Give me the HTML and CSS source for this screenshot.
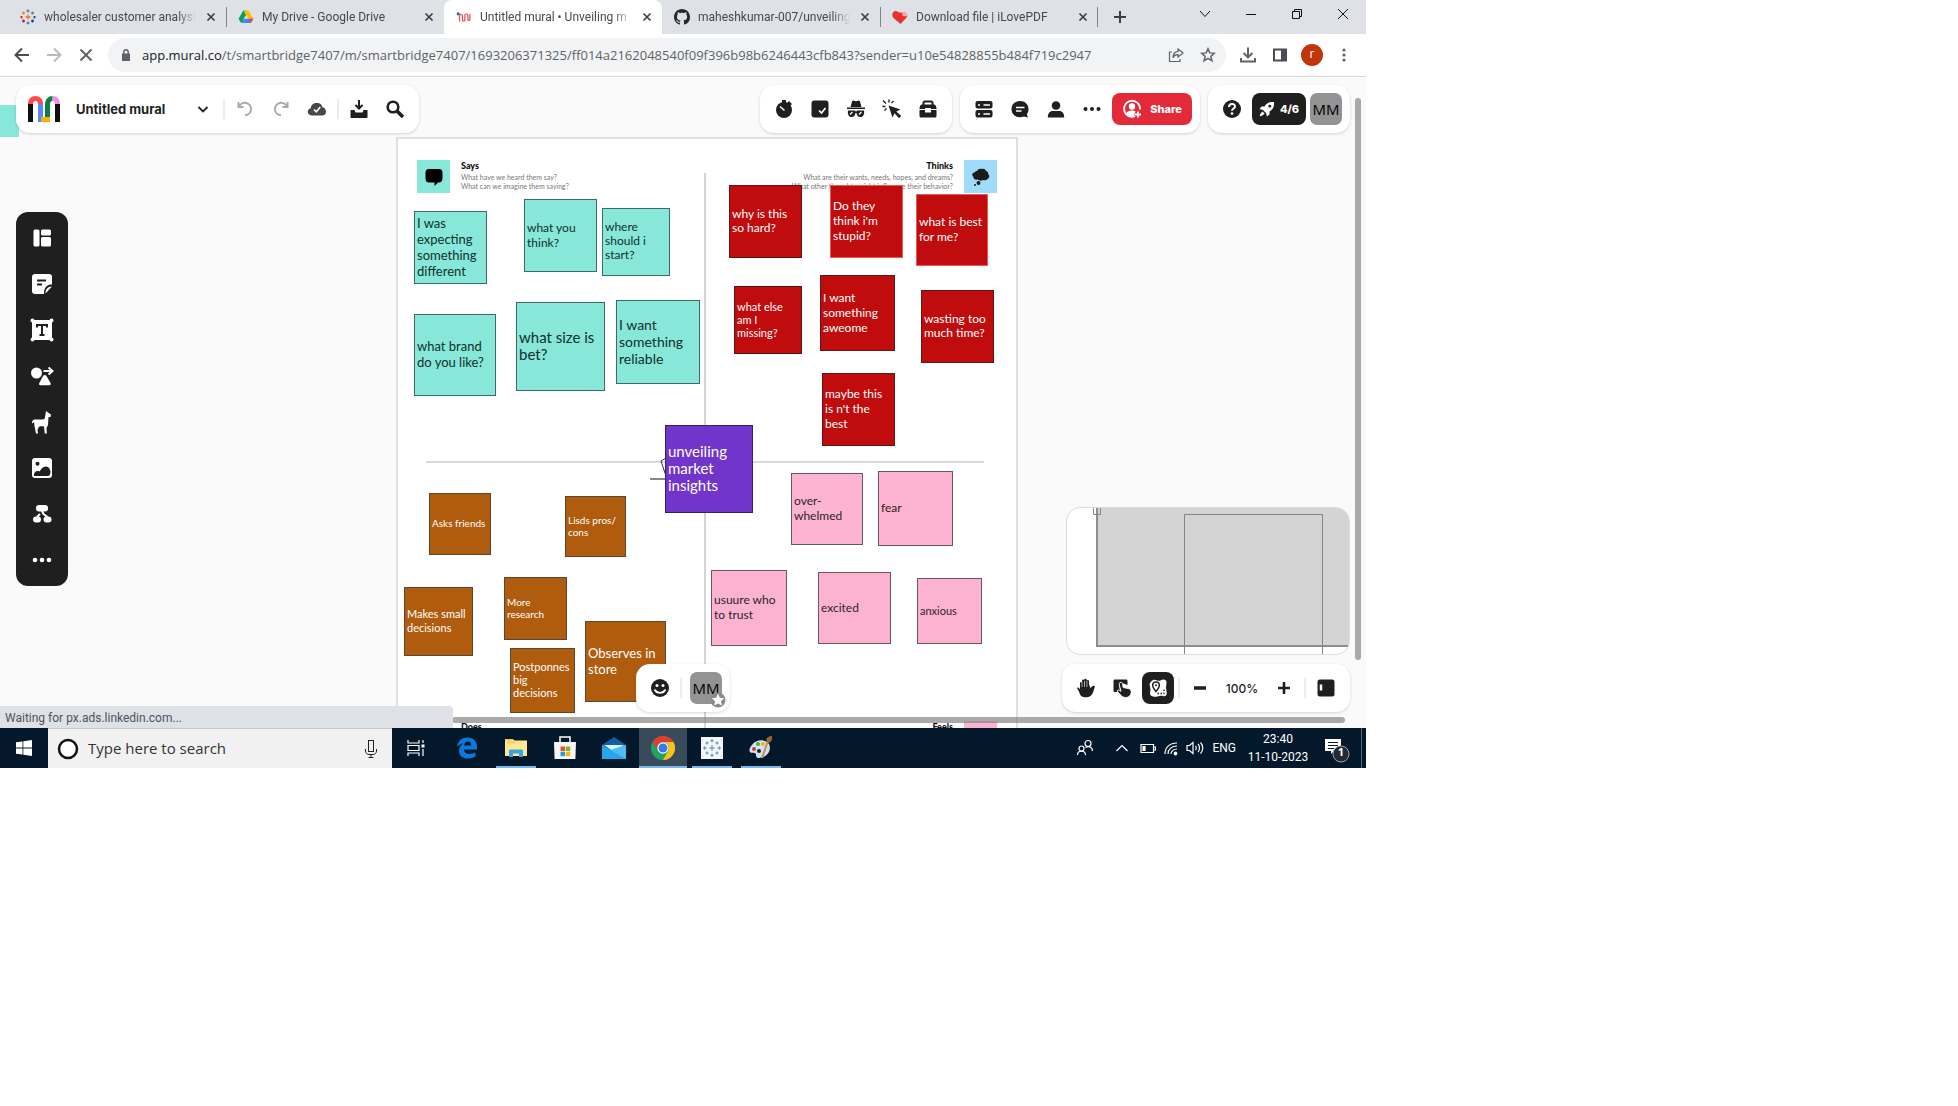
FILE: index.html
```html
<!DOCTYPE html>
<html lang="en">
<head>
<meta charset="utf-8">
<title>Untitled mural</title>
<link rel="stylesheet" href="styles.css">
</head>
<body>
<div class="desktop">
  <header class="tabs">
    <div class="tab">
      <svg class="fav" viewBox="0 0 16 16" fill="none" stroke-width="1.3"><path stroke="#e8762d" d="M8 5.5v5M5.500 8h5"/><path stroke="#5b7fa6" d="M8 .5v3M6.500 2h3M8 12.500v3M6.500 14h3"/><path stroke="#eb912c" d="M3.500 2.500v3M2 4h3"/><path stroke="#c72037" d="M3.500 10.500v3M2 12h3M1.500 7v2.500M.5 8h2"/><path stroke="#1f457e" d="M12.500 10.500v3M11 12h3M14.500 7v2.500M13.500 8h2"/><path stroke="#59879b" d="M12.500 2.500v3M11 4h3"/></svg>
      <span class="tab-name">wholesaler customer analysis</span>
      <button class="tab-x" aria-label="Close tab"><svg viewBox="0 0 10 10"><path d="M1.500 1.500l7 7M8.500 1.500l-7 7"/></svg></button>
    </div>
    <div class="tab line-left">
      <svg class="fav" viewBox="0 0 16 16"><path fill="#00a94f" d="M5.500 1.500h2.700L3.400 14 .7 9.800z"/><path fill="#0f9d58" d="M5.500 1.500L8 5.800 3.300 14 .7 9.800z"/><path fill="#fbbc04" d="M5.500 1.500h5l4.800 8.300h-5z"/><path fill="#4285f4" d="M5.800 9.800h9.500L12.800 14H3.300z"/><path fill="#ea4335" d="M10.400 9.800h4.900L12.800 14z"/></svg>
      <span class="tab-name">My Drive - Google Drive</span>
      <button class="tab-x" aria-label="Close tab"><svg viewBox="0 0 10 10"><path d="M1.500 1.500l7 7M8.500 1.500l-7 7"/></svg></button>
    </div>
    <div class="tab active">
      <svg class="fav" viewBox="0 0 16 16" fill="none" stroke="#e5484d" stroke-width="1.200"><path d="M3.500 12.500V7a1.500 1.500 0 013 0v4a1.200 1.200 0 002.400 0V6.500a1.500 1.500 0 013 0v4a1 1 0 002 0V5"/><circle cx="2.200" cy="4.800" r="1.600" fill="#2463c5" stroke="none"/></svg>
      <span class="tab-name">Untitled mural • Unveiling m</span>
      <button class="tab-x" aria-label="Close tab"><svg viewBox="0 0 10 10"><path d="M1.500 1.500l7 7M8.500 1.500l-7 7"/></svg></button>
    </div>
    <div class="tab">
      <svg class="fav" viewBox="0 0 16 16"><path fill="#24292f" d="M8 0C3.580 0 0 3.580 0 8c0 3.540 2.290 6.530 5.470 7.590.4.070.55-.17.55-.38 0-.19-.01-.82-.01-1.490-2.010.37-2.530-.49-2.690-.94-.09-.23-.48-.94-.82-1.130-.28-.15-.68-.52-.01-.53.63-.01 1.080.58 1.230.82.72 1.210 1.870.87 2.330.66.07-.52.28-.87.51-1.070-1.780-.2-3.640-.89-3.640-3.950 0-.87.31-1.590.82-2.150-.08-.2-.36-1.020.08-2.120 0 0 .67-.21 2.200.82.64-.18 1.320-.27 2-.27s1.360.09 2 .27c1.530-1.040 2.200-.82 2.200-.82.44 1.100.16 1.920.08 2.120.51.56.82 1.270.82 2.150 0 3.070-1.870 3.750-3.650 3.950.29.25.54.73.54 1.480 0 1.070-.01 1.930-.01 2.200 0 .21.15.46.55.38A8.010 8.010 0 0016 8c0-4.420-3.580-8-8-8z"/></svg>
      <span class="tab-name">maheshkumar-007/unveiling</span>
      <button class="tab-x" aria-label="Close tab"><svg viewBox="0 0 10 10"><path d="M1.500 1.500l7 7M8.500 1.500l-7 7"/></svg></button>
    </div>
    <div class="tab line-left line-right">
      <svg class="fav" viewBox="0 0 16 16"><path fill="#e5322d" d="M1 3.500C2.500 1.500 5 1.500 7 3.500h3l5.500 4L8.500 15 1.500 9C0 7.500 0 5 1 3.500z"/><path fill="#f7a9a7" d="M10 3.500c2.500-2 6 .5 5.500 4l-5-.5z"/></svg>
      <span class="tab-name">Download file | iLovePDF</span>
      <button class="tab-x" aria-label="Close tab"><svg viewBox="0 0 10 10"><path d="M1.500 1.500l7 7M8.500 1.500l-7 7"/></svg></button>
    </div>
    <button class="new-tab" aria-label="New tab"><svg width="14" height="14" viewBox="0 0 14 14"><path fill="none" stroke="#3c4043" stroke-width="2" d="M7 1v12M1 7h12"/></svg></button>
    <div class="win">
      <button aria-label="Search tabs"><svg viewBox="0 0 12 12"><path d="M1 3l5 5.500L11 3"/></svg></button>
      <button aria-label="Minimize"><svg viewBox="0 0 12 12"><path d="M1 6.500h10"/></svg></button>
      <button aria-label="Restore"><svg viewBox="0 0 12 12"><path d="M1.500 3.500h7v7h-7zM3.500 3.500v-2h7v7h-2"/></svg></button>
      <button aria-label="Close"><svg viewBox="0 0 12 12"><path d="M1 1l10 10M11 1L1 11"/></svg></button>
    </div>
  </header>

  <div class="nav">
    <button class="nav-b" aria-label="Back"><svg viewBox="0 0 16 16"><path stroke="#4a4d51" d="M15 8H2M8 1.500L1.500 8 8 14.500"/></svg></button>
    <button class="nav-b" aria-label="Forward"><svg viewBox="0 0 16 16"><path stroke="#b9bbbe" d="M1 8h13M8 1.500L14.500 8 8 14.500"/></svg></button>
    <button class="nav-b" aria-label="Stop"><svg viewBox="0 0 16 16"><path stroke="#5f6368" d="M2.500 2.500l11 11M13.500 2.500l-11 11"/></svg></button>
    <div class="omni">
      <svg class="lock" viewBox="0 0 10 12"><path fill="#5f6368" d="M1 4.500h8V12H1z"/><path fill="none" stroke="#5f6368" stroke-width="1.400" d="M2.800 5V3a2.200 2.200 0 014.400 0v2"/></svg>
      <a class="url" href="#"><b>app.mural.co</b>/t/smartbridge7407/m/smartbridge7407/1693206371325/ff014a2162048540f09f396b98b6246443cfb843?sender=u10e54828855b484f719c2947</a>
      <button class="nav-b thin" aria-label="Share page"><svg viewBox="0 0 16 16"><path stroke="#5f6368" d="M4 5H1.500v9.500h10.500V12M10 2l5 4-5 4V7.700C7.500 7.600 5.800 8.800 5 10.800 5 7 7 4.600 10 4.300z"/></svg></button>
      <button class="nav-b thin" aria-label="Bookmark"><svg viewBox="0 0 16 16"><path stroke="#5f6368" stroke-width="1.500" d="M8 1.800l1.800 4.100 4.500.4-3.400 3 1 4.400L8 11.400l-3.900 2.300 1-4.400-3.400-3 4.500-.4z"/></svg></button>
    </div>
    <button class="nav-b" aria-label="Downloads"><svg viewBox="0 0 16 16"><path stroke="#5f6368" d="M8 .5v9M3.500 6L8 10.300 12.500 6M1 11v3.500h14V11"/></svg></button>
    <button class="nav-b" aria-label="Side panel"><svg viewBox="0 0 16 16"><path stroke="#4a4d51" d="M2 2.500h12v11H2z"/><path fill="#4a4d51" d="M9 2h5v12H9z"/></svg></button>
    <button class="nav-b" aria-label="Profile"><span class="me">r</span></button>
    <button class="nav-b" aria-label="Menu"><svg viewBox="0 0 16 16"><g fill="#5f6368"><circle cx="8" cy="3" r="1.600"/><circle cx="8" cy="8" r="1.600"/><circle cx="8" cy="13" r="1.600"/></g></svg></button>
  </div>

  <main class="canvas">
    <div class="teal-edge"></div>
    <section class="sheet">
      <i class="vline"></i><i class="hline"></i>
      <div class="head says">
        <span class="badge"><svg viewBox="0 0 18 18"><path d="M4 1h10c2.500 0 3.500 1.300 3.500 4v5c0 3-1.300 4.500-3.500 4.500h-1L9.500 18v-3.500H4C1.500 14.500.5 13 .5 10V5C.5 2.300 1.500 1 4 1z"/></svg></span>
        <div><h2>Says</h2><p>What have we heard them say?<br>What can we imagine them saying?</p></div>
      </div>
      <div class="head thinks">
        <span class="badge"><svg viewBox="0 0 18 18" fill="#1c1c1c"><path d="M5 3c1-2 3-2.500 4.500-2 2-.5 4 0 4.500 2 2 .5 2.500 2 2 3 2 1.500 1.500 4-.5 5-1 1.500-3 1.500-4.500 1-1.500 1-4 1-5-.5C3 12 1 11 1.500 9-.5 7.500 0 4.500 2.500 4.500 3 3.500 4 3 5 3z"/><circle cx="6.500" cy="15" r="2"/><circle cx="3" cy="17" r="1"/></svg></span>
        <div><h2>Thinks</h2><p>What are their wants, needs, hopes, and dreams?<br>What other thoughts might influence their behavior?</p></div>
      </div>
      <div class="head does"><div><h2>Does</h2></div></div>
      <div class="head feels"><span class="badge"></span><div><h2>Feels</h2></div></div>
      <svg class="scribble" viewBox="0 0 20 24" fill="none" stroke="#333"><path d="M16 1l-5 3 5 15"/><path d="M0 22h16" stroke="#111"/></svg>
    </section>

    <div class="note teal t16" style="left:414px;top:134px;width:73px;height:73px"><p>I was<br>expecting<br>something<br>different</p></div>
    <div class="note teal t15" style="left:524px;top:122px;width:73px;height:73px"><p>what you<br>think?</p></div>
    <div class="note teal t14" style="left:602px;top:131px;width:68px;height:68px"><p>where<br>should i<br>start?</p></div>
    <div class="note teal t16" style="left:414px;top:237px;width:82px;height:82px"><p>what brand<br>do you like?</p></div>
    <div class="note teal t17" style="left:516px;top:225px;width:89px;height:89px"><p>what size is<br>bet?</p></div>
    <div class="note teal t17 sm" style="left:616px;top:223px;width:84px;height:84px"><p>I want<br>something<br>reliable</p></div>

    <div class="note red t14" style="left:729px;top:108px;width:73px;height:73px"><p>why is this<br>so hard?</p></div>
    <div class="note red soft t15" style="left:830px;top:108px;width:73px;height:73px"><p>Do they<br>think i'm<br>stupid?</p></div>
    <div class="note red soft t15" style="left:916px;top:117px;width:72px;height:72px"><p>what is best<br>for me?</p></div>
    <div class="note red t13" style="left:734px;top:209px;width:68px;height:68px"><p>what else<br>am I<br>missing?</p></div>
    <div class="note red t15" style="left:820px;top:198px;width:75px;height:76px"><p>I want<br>something<br>aweome</p></div>
    <div class="note red t14" style="left:921px;top:213px;width:73px;height:73px"><p>wasting too<br>much time?</p></div>
    <div class="note red t15" style="left:822px;top:296px;width:73px;height:73px"><p>maybe this<br>is n't the<br>best</p></div>

    <div class="note purple t17" style="left:665px;top:348px;width:88px;height:88px"><p>unveiling<br>market<br>insights</p></div>

    <div class="note brown t12" style="left:429px;top:416px;width:62px;height:62px"><p>Asks friends</p></div>
    <div class="note brown t12" style="left:565px;top:419px;width:61px;height:61px"><p>Lisds pros/<br>cons</p></div>
    <div class="note brown t14 sm" style="left:404px;top:510px;width:69px;height:69px"><p>Makes small<br>decisions</p></div>
    <div class="note brown t12" style="left:504px;top:500px;width:63px;height:63px"><p>More<br>research</p></div>
    <div class="note brown t13" style="left:510px;top:571px;width:65px;height:65px"><p>Postponnes<br>big<br>decisions</p></div>
    <div class="note brown t16" style="left:585px;top:544px;width:81px;height:81px"><p>Observes in<br>store</p></div>

    <div class="note pink t15" style="left:791px;top:396px;width:72px;height:72px"><p>over-<br>whelmed</p></div>
    <div class="note pink t14" style="left:878px;top:394px;width:75px;height:75px"><p>fear</p></div>
    <div class="note pink t15" style="left:711px;top:493px;width:76px;height:76px"><p>usuure who<br>to trust</p></div>
    <div class="note pink t15" style="left:818px;top:495px;width:73px;height:72px"><p>excited</p></div>
    <div class="note pink t13" style="left:917px;top:501px;width:65px;height:66px"><p>anxious</p></div>

    <div class="topbar">
      <div class="bar">
        <svg class="logo" viewBox="0 0 32 26"><path fill="#111" d="M0 8h5v18H0zM27 8h5v18h-5z"/><path fill="#ff4b4b" d="M0 8C0 3 3 0 7.500 0S15 3 15 8h-5c0-2-1-3-2.500-3S5 6 5 8z"/><path fill="#5887ff" d="M10 8h5v18h-5z"/><path fill="#ffb000" d="M13 21h9v5h-9z"/><path fill="#0a8043" d="M17 21V9c0-5.500 3-9 7.500-9v5C23 5 22 6 22 8.500V21z"/><path fill="#f48af0" d="M24.500 0C29 0 32 3 32 8h-5c0-2-1-3-2.500-3z"/></svg>
        <strong class="title">Untitled mural</strong>
        <button class="ic" aria-label="Mural menu"><svg viewBox="0 0 20 20"><path fill="none" stroke="#222" stroke-width="1.800" d="M5.500 8l4.500 4.500L14.500 8"/></svg></button>
        <i class="sep"></i>
        <button class="ic" aria-label="Undo"><svg viewBox="0 0 20 20"><path fill="none" stroke="#aaa" stroke-width="2" d="M3.500 3v5h5M4 8a6.200 6.200 0 116 8.200"/></svg></button>
        <button class="ic" aria-label="Redo"><svg viewBox="0 0 20 20"><path fill="none" stroke="#aaa" stroke-width="2" d="M16.500 3v5h-5M16 8a6.200 6.200 0 10-6 8.200"/></svg></button>
        <button class="ic" aria-label="Saved"><svg viewBox="0 0 20 20"><path fill="#484848" d="M5 16.500c-5.500 0-5.500-6.500-1.200-7.300C4 5 8 3.500 10 4c4 0 5 2.500 5.300 4C20 9 20.500 16.500 15 16.500z"/><path fill="none" stroke="#fff" stroke-width="1.600" d="M7 10.500l2.300 2.300 4-4.800"/></svg></button>
        <i class="sep"></i>
        <button class="ic" aria-label="Export"><svg viewBox="0 0 20 20"><path d="M1.500 11h4l1 2.500h7l1-2.500h4v7c0 .6-.4 1-1 1h-15c-.6 0-1-.4-1-1z"/><path fill="none" stroke="#1f1f1f" stroke-width="2" d="M10 1v8M6.500 6L10 9.500 13.500 6"/></svg></button>
        <button class="ic" aria-label="Find"><svg viewBox="0 0 20 20"><circle cx="8" cy="8" r="5.300" fill="none" stroke="#1f1f1f" stroke-width="2.600"/><path stroke="#1f1f1f" stroke-width="3.600" d="M12 12l6 6"/></svg></button>
      </div>
      <div class="bar push">
        <button class="ic" aria-label="Timer"><svg viewBox="0 0 20 20"><circle cx="10" cy="11" r="8"/><path d="M8 1h4v3H8zM15 2l3 3-2 2-3-3z"/><path stroke="#fff" stroke-width="1.500" d="M6 7.500l4.500 4"/></svg></button>
        <button class="ic" aria-label="Voting"><svg viewBox="0 0 20 20"><rect x="1.500" y="1.500" width="17" height="17" rx="3"/><path fill="none" stroke="#fff" stroke-width="1.700" d="M9 11.500l2.500 2.500 4-5"/></svg></button>
        <button class="ic" aria-label="Private mode"><svg viewBox="0 0 20 20"><path d="M4.500 8L6 2.500c.3-1 1-1.300 2-.8 1.200.6 2.800.6 4 0 1-.5 1.700-.2 2 .8L15.500 8zM1 8.500h18V10H1zM2 11.500h6.500l1.500 1 1.500-1H18c.6 4-.8 6.500-3.500 6.500-2.500 0-3.600-1.500-4-4h-1c-.4 2.500-1.500 4-4 4C2.800 18 1.400 15.500 2 11.500z"/><path stroke="#fff" stroke-width="1.300" d="M4 15.500l2.500-2.500M13 15.500l2.500-2.500"/></svg></button>
        <button class="ic" aria-label="Laser pointer"><svg viewBox="0 0 20 20"><path d="M6.500 6.500l12 4-4.200 2 5 4.500-2.300 2.300-4.500-5-2 4.200z"/><path stroke="#1f1f1f" stroke-width="1.400" d="M1 1.500l3 3M7 .5v3M.5 7.500h3M11.500 2L9.500 4M2.500 11.500L4.500 9.500"/></svg></button>
        <button class="ic" aria-label="Toolbox"><svg viewBox="0 0 20 20"><path fill="none" stroke="#1f1f1f" stroke-width="2" d="M5.500 6V4c0-1 .5-1.500 1.500-1.500h6c1 0 1.500.5 1.500 1.500v2"/><path d="M4 5.500h12c1.500 0 2.500 1.500 2.500 4.500h-5.500v-1H7v1H1.500C1.500 7 2.500 5.500 4 5.500zM1.500 11H7v2.500h6V11h5.500v6c0 .8-.5 1.500-1.500 1.500H3c-1 0-1.500-.7-1.500-1.500z"/></svg></button>
      </div>
      <div class="bar">
        <button class="ic" aria-label="Outline"><svg viewBox="0 0 20 20"><rect x="1.500" y="2" width="17" height="7.500" rx="2"/><rect x="1.500" y="11" width="17" height="7.500" rx="2"/><path stroke="#fff" stroke-width="1.600" d="M9.500 6H16M9.500 15H16M4 6h2M4 15h2"/></svg></button>
        <button class="ic" aria-label="Comments"><svg viewBox="0 0 20 20"><path d="M10 2c5 0 8.500 3.500 8.500 8 0 2-.5 3.500-1.500 5l.7 3.500-3.700-1C7 20 1.500 16 1.500 10 1.500 5.500 5 2 10 2z"/><path stroke="#fff" stroke-width="1.500" d="M6 8.500h8.500M6 12h5.500"/></svg></button>
        <button class="ic" aria-label="Members"><svg viewBox="0 0 20 20"><circle cx="10" cy="6.500" r="4.300"/><path d="M1.800 18.500c0-4.500 2.200-6.500 5-6.500h6.400c2.800 0 5 2 5 6.500z"/></svg></button>
        <button class="ic" aria-label="More"><svg viewBox="0 0 20 20"><circle cx="3.500" cy="10" r="2"/><circle cx="10" cy="10" r="2"/><circle cx="16.500" cy="10" r="2"/></svg></button>
        <button class="share"><svg width="20" height="20" viewBox="0 0 20 20" fill="none" stroke="#fff" stroke-width="1.800"><path d="M13 17.200A8 8 0 1118 10.500"/><circle cx="10" cy="7.500" r="3.200" fill="#fff" stroke="none"/><path fill="#fff" stroke="none" d="M4 15c1-3 3-3.500 6-3.500 1.500 0 2.500.2 3.500.8L12 17H8z"/><path d="M16 12.500v6M13 15.500h6"/></svg>Share</button>
      </div>
      <div class="bar">
        <button class="ic" aria-label="Help"><svg viewBox="0 0 20 20"><circle cx="10" cy="10" r="9"/><path fill="none" stroke="#fff" stroke-width="2" d="M7 8c0-4 6-4 6-.5 0 2-3 2-3 4.300"/><circle cx="10" cy="14.500" r="1.300" fill="#fff"/></svg></button>
        <button class="plan"><svg width="16" height="16" viewBox="0 0 16 16" fill="#fff"><path d="M15 1c.4 4.500-1 7.500-4.500 9.500v3L8 15.500 7 12 4 9 .5 8l2-2.500h3C7.500 2 10.500.6 15 1z"/><circle cx="10.800" cy="5.200" r="1.400" fill="#222"/><path d="M3.500 10.500l2 2C4 14.500 2.500 15 .8 15.200 1 13.500 1.500 12 3.500 10.500z"/></svg>4/6</button>
        <span class="mm">MM</span>
      </div>
    </div>

    <div class="tools">
      <button aria-label="Templates"><svg viewBox="0 0 24 24"><rect x="3.500" y="3.500" width="6" height="17" rx="1.500"/><rect x="11" y="3.500" width="10" height="6" rx="1.500"/><rect x="11" y="11" width="10" height="9.500" rx="1.500"/></svg></button>
      <button aria-label="Sticky note"><svg viewBox="0 0 24 24"><path d="M5 2h14c2 0 3 1 3 3v7.500c-5 0-8 2.500-8 9.500H5c-2 0-3-1-3-3V5c0-2 1-3 3-3z"/><path d="M15.500 21.500c0-4 2-7 6.500-7z"/><path stroke="#1f1f1f" stroke-width="2" d="M7 8.500h9M7 12.500h5"/></svg></button>
      <button aria-label="Text"><svg viewBox="0 0 24 24"><path d="M2 2h20v20H2z"/><circle cx="2.500" cy="2.500" r="2"/><circle cx="21.500" cy="2.500" r="2"/><circle cx="2.500" cy="21.500" r="2"/><circle cx="21.500" cy="21.500" r="2"/><path fill="none" stroke="#1f1f1f" stroke-width="2" d="M7 9.500V7h10v2.500M12 7v10M9.500 17h5"/></svg></button>
      <button aria-label="Shapes"><svg viewBox="0 0 24 24"><circle cx="6.500" cy="9" r="5.500"/><path d="M13 12c1-1.500 2.500-1.500 3.500 0l4 7c.6 1.300 0 2.300-1.200 2.300H10.500c-1.200 0-1.800-1-1.200-2.300z"/><path fill="none" stroke="#fff" stroke-width="2" d="M13.500 7H22M18.500 3.500L22.500 7l-4 3.500"/></svg></button>
      <button aria-label="Icons"><svg viewBox="0 0 24 24"><path d="M16 1l2 1.500L21 4.500l-.5 2.500h-2L18 15l-1.500 3 .3 5.500h-2L14 16.500c-2-.3-3.500-.3-5 .2l-1.500 3 .5 3.800H6L4.500 16 4 12l-1.700 1.500C1.500 11.500 3 9.500 5 9.500h7.500c2 0 2.500-1 2.500-2.500z"/></svg></button>
      <button aria-label="Images"><svg viewBox="0 0 24 24"><rect x="2" y="2" width="20" height="20" rx="3"/><circle cx="7.500" cy="7.800" r="2" fill="#1f1f1f"/><path fill="#1f1f1f" d="M4 20c-.5-4 3-6 5.500-4.500 1.500-2 3-5 6.500-5 3 0 4 3 4.500 5 0 3-1 4.500-3 4.500z"/></svg></button>
      <button aria-label="Diagrams"><svg viewBox="0 0 24 24"><rect x="6" y="3" width="12" height="6.500" rx="3"/><rect x="3" y="14.500" width="8" height="6" rx="3"/><rect x="13.500" y="14.500" width="8" height="6" rx="3"/><path fill="none" stroke="#fff" stroke-width="2" d="M12 9l1.500 3L17.500 15M10 12l-3 3"/></svg></button>
      <button aria-label="More tools"><svg viewBox="0 0 24 24"><circle cx="5" cy="12" r="2.300"/><circle cx="12" cy="12" r="2.300"/><circle cx="19" cy="12" r="2.300"/></svg></button>
    </div>

    <i class="vscroll"></i><i class="hscroll"></i>

    <div class="bar people">
      <button class="ic" aria-label="React"><svg viewBox="0 0 20 20"><circle cx="10" cy="10" r="9"/><circle cx="7" cy="7.500" r="1.500" fill="#fff"/><circle cx="13" cy="7.500" r="1.500" fill="#fff"/><path fill="none" stroke="#fff" stroke-width="1.800" d="M4.500 11.500c2.500 4.500 8.500 4.500 11 0"/></svg></button>
      <i class="sep"></i>
      <span class="mm host">MM<svg viewBox="0 0 16 16"><circle cx="8" cy="8" r="7.500" fill="#8a8a8a"/><path fill="#fff" d="M8 1.800l1.800 4 4.400.5-3.300 3 1 4.300L8 11.400l-3.900 2.200 1-4.300-3.300-3 4.400-.5z"/></svg></span>
    </div>

    <div class="corner">
      <div class="map"><svg viewBox="0 0 282 146"><path fill="#d4d4d4" d="M30 0h252v138H30z"/><path fill="none" stroke="#8d8d8d" stroke-width="2" d="M30 0v138h252"/><path fill="none" stroke="#858585" d="M26.500 0v6.500h7V0M117.500 146V6.500h138V146"/></svg></div>
      <div class="bar">
        <button class="ic" aria-label="Pan"><svg viewBox="0 0 20 20"><path d="M1 10c1-1 2-.6 3 1.500V5c0-1.500 2-1.500 2 0V2.800c0-1.600 2.300-1.600 2.300 0V1.900c0-1.500 2.400-1.500 2.400 0v1c.3-1.400 2.300-1.200 2.300.3v3l1.500 4c1.200-2.300 4-3.500 4.500-1.700-1.500 2.500-1.500 10.500-8 10.700-5.500.2-7-2-7.500-4.500z"/><path stroke="#fff" stroke-width=".6" d="M6 4v5M8.500 3v6M10.900 3v6"/></svg></button>
        <button class="ic" aria-label="Touch"><svg viewBox="0 0 20 20"><path d="M3 1.500h11c1 0 1.500.6 1.500 1.500v4L10 5 7 6l1 7-3 1H3c-1 0-1.500-.5-1.500-1.500V3c0-1 .5-1.500 1.500-1.500z"/><path stroke="#fff" stroke-width=".9" d="M8 4.500c1.600-.5 2.500.3 2.700 2l.4 3 5 1c2.500.5 3.400 2 3.100 4-.3 3-2.500 5-5.400 5-3.800 0-5.300-2.800-8.800-6.500 1-1.500 2.700-1 4 .3L7.300 6.800c-.2-1.200-.1-2 .7-2.300z"/></svg></button>
        <button class="ic dark" aria-label="Minimap"><svg viewBox="0 0 20 20"><path fill="#fff" d="M3 3.500c2-2 4-2 6-1 2.500 1 4-.5 6.500-1 2 0 3 1 3 3l-.5 5 .8 6c0 2-2 3.500-4 2.500-3-1-4 .5-7 .8C5 19 2 18 2 15l.5-4L1.500 6z"/><path fill="#fff" stroke="#1f1f1f" stroke-width="1.500" d="M8 13.500c-2.500-3-3.300-4.500-3.300-6.300C4.700 3 11.300 3 11.300 7.200c0 1.800-.8 3.300-3.300 6.300z"/><circle cx="8" cy="7.200" r="1" fill="#1f1f1f"/><path fill="none" stroke="#1f1f1f" stroke-width="1.300" stroke-dasharray="1.500 1.500" d="M9.500 15.500h6.500v-4"/></svg></button>
        <i class="sep"></i>
        <button class="ic" aria-label="Zoom out"><svg viewBox="0 0 20 20"><path stroke="#1f1f1f" stroke-width="3.500" d="M4 10h12"/></svg></button>
        <span class="pct">100%</span>
        <button class="ic" aria-label="Zoom in"><svg viewBox="0 0 20 20"><path stroke="#1f1f1f" stroke-width="2.600" d="M4 10h12M10 4v12"/></svg></button>
        <i class="sep"></i>
        <button class="ic" aria-label="Panel"><svg viewBox="0 0 20 20"><rect x="1.500" y="1.500" width="17" height="17" rx="2.500"/><path stroke="#fff" stroke-width="2.500" d="M5 6.500v6"/></svg></button>
      </div>
    </div>
    <div class="status">Waiting for px.ads.linkedin.com...</div>
  </main>

  <footer class="task">
    <button class="start" aria-label="Start"><svg width="16" height="16" viewBox="0 0 16 16" fill="#fff"><path d="M0 2.300L6.500 1.400v6.200H0zM7.300 1.300L16 0v7.600H7.300zM0 8.400h6.500v6.200L0 13.700zM7.300 8.400H16V16l-8.700-1.300z"/></svg></button>
    <label class="search">
      <svg width="22" height="22" viewBox="0 0 22 22"><circle cx="11" cy="11" r="9" fill="#fff" stroke="#111" stroke-width="2.500"/></svg>
      <input type="text" placeholder="Type here to search" aria-label="Search">
      <svg width="12" height="18" viewBox="0 0 12 18" fill="none" stroke="#222"><rect x="3.500" y=".5" width="5" height="11"/><path d="M.5 9v2c0 2.500 2 3.500 3.500 3.500h4c1.500 0 3.500-1 3.500-3.500V9M6 14.500v3M3.500 17.500h5"/></svg>
    </label>
    <button class="app view" aria-label="Task view"><svg viewBox="0 0 24 24" fill="none" stroke="#fff" stroke-width="1.200"><path d="M4 4v3h11V4M4 20v-3h11v3M4 9.500h11v5H4zM19 4v3M19 13v7"/><path fill="#fff" stroke="none" d="M17.500 8.500h3v3h-3z"/></svg></button>
    <button class="app" aria-label="Edge"><svg viewBox="0 0 24 24"><path fill="#0a7bdc" d="M2 11C3 4.500 7 1.500 12.500 1.500c6 0 9.500 4 9.500 9.500v2.500H9c.2 3 2.500 4.500 5.500 4.500 2.200 0 4.300-.6 6-1.700v4.300c-2 1.200-4.500 1.900-7.500 1.900-5.500 0-9-3-9-7.800 0-3.500 2-6 4.500-7.200C6 7.500 4 9 2 11zm7.200-1.500h7c0-2.500-1.200-4-3.400-4-2 0-3.300 1.500-3.600 4z"/></svg></button>
    <button class="app open" aria-label="File Explorer"><svg viewBox="0 0 24 24"><path fill="#f5c84c" d="M1 3h8l2 2H1z"/><path fill="#ffe795" d="M1 4.500h22V20H1z"/><path fill="#f5d169" d="M3 5h8v2.500H3z"/><path fill="#35a6dc" d="M5 21v-6c0-1 .5-1.500 1.500-1.500h11c1 0 1.500.5 1.500 1.500v6h-4v-3.500H9V21z"/></svg></button>
    <button class="app" aria-label="Store"><svg viewBox="0 0 24 24"><path fill="none" stroke="#fff" stroke-width="1.500" d="M7 7V1h10v6"/><path fill="#f6f6f6" d="M1 6h22l-.6 17H1.600z"/><path fill="#e8502a" d="M7.500 10.500H12V15H7.500z"/><path fill="#7cb82f" d="M12.700 10.500h4.500V15h-4.500z"/><path fill="#1aa1dd" d="M7.500 15.700H12v4.500H7.500z"/><path fill="#f5b50f" d="M12.700 15.700h4.500v4.500h-4.500z"/></svg></button>
    <button class="app" aria-label="Mail"><svg viewBox="0 0 24 24"><path fill="#0f5fa8" d="M0 9l12-8 12 8v6H0z"/><path fill="#dff1fb" d="M2 9h20l-10 7z"/><path fill="#27a7ea" d="M0 9l12 7 12-7v14H0z"/><path fill="#4dbcf5" d="M24 9v14L8 14z"/></svg></button>
    <button class="app open current" aria-label="Chrome"><svg viewBox="0 0 24 24"><circle cx="12" cy="12" r="12" fill="#1fa463"/><path fill="#e33b2e" d="M1.600 6A12 12 0 0122.400 6H12a6 6 0 00-5.200 9z"/><path fill="#fbc116" d="M22.400 6A12 12 0 0112 24l5.200-9A6 6 0 0012 6z"/><circle cx="12" cy="12" r="5.700" fill="#fff"/><circle cx="12" cy="12" r="4.500" fill="#3b78e7"/></svg></button>
    <button class="app open" aria-label="Tableau"><svg viewBox="0 0 24 24"><path fill="#f2f5f8" d="M1 1h22v22H1z"/><path stroke="#5c8aa8" stroke-width="1" d="M12 9v6M9 12h6M12 3v3.500M10.500 4.700h3M12 17.500V21M10.500 19.300h3M4.700 10.500v3M3 12h3.500M19.300 10.500v3M17.500 12H21M7 5.500v3M5.500 7h3M17 5.500v3M15.500 7h3M7 15.500v3M5.500 17h3M17 15.500v3M15.500 17h3"/></svg></button>
    <button class="app open" aria-label="Paint"><svg viewBox="0 0 24 24"><path fill="#cfe3f0" d="M3 9C7 3 17 3 20 8c3 6-2 14-10 14-3 0-3-2-3-4-1-2-6 0-6.500-3C.3 13 1 11 3 9z"/><circle cx="9" cy="8" r="2" fill="#59a832"/><circle cx="5" cy="13" r="2" fill="#d73a31"/><circle cx="14" cy="8" r="2" fill="#eab320"/><circle cx="10" cy="15" r="2" fill="#0b2035"/><path stroke="#c98d4e" stroke-width="2" d="M19 5l-6 17"/><path fill="#9b6235" d="M17 4c1-3 3-4 6-4 .5 3-.5 6-3 7z"/></svg></button>
    <div class="tray">
      <svg width="18" height="18" viewBox="0 0 18 18"><circle cx="12" cy="4.500" r="3"/><circle cx="5.500" cy="9.500" r="2.500"/><path d="M1.500 16c0-5 8-5 8 0M9.500 8.500c3-2 7-.5 7 3.500"/></svg>
      <svg class="up" width="12" height="12" viewBox="0 0 12 12"><path d="M.5 9L6 3.500 11.500 9"/></svg>
      <svg width="16" height="16" viewBox="0 0 16 16"><path d="M1 4.500h12.500v8H1zM14 7h1.500v3H14"/><path fill="#fff" d="M3 6.500h2v4H3z"/></svg>
      <svg width="14" height="16" viewBox="0 0 14 16"><path d="M1 14C1 7 6 3 13 3M4 14c0-5 4-8 9-8M7 14c0-3 3-5 6-5"/><circle cx="11.500" cy="13.500" r="1.300" fill="#fff"/></svg>
      <svg width="18" height="16" viewBox="0 0 18 16"><path d="M1 5.500h2.500L7 2.500v11l-3.500-3H1zM9.500 6c1 1 1 3 0 4M12 4c2 2 2 6 0 8M14.500 2.500c3 3 3 8 0 11"/></svg>
      <span>ENG</span>
    </div>
    <div class="clock">23:40<br>11-10-2023</div>
    <button class="note-c" aria-label="Notifications"><svg width="26" height="26" viewBox="0 0 26 26"><path fill="#fff" d="M1 2h16v12h-7l-3 3v-3H1z"/><path stroke="#0a1a28" d="M4 5.500h10M4 8.500h10M4 11.500h6"/><circle cx="17" cy="17" r="8" fill="#222b33" stroke="#9aa0a6"/></svg><b>1</b></button>
    <i class="peek"></i>
  </footer>
</div>
</body>
</html>
```
FILE: styles.css
```css
* { box-sizing: border-box; }
body { margin: 0; background: #fff; font-family: "Open Sans", sans-serif; color: #1f1f1f; }
button { border: 0; padding: 0; margin: 0; background: none; color: inherit; font: inherit; display: flex; align-items: center; justify-content: center; flex: none; }
p, h2 { margin: 0; }
i { display: block; }
svg { display: block; flex: none; }

.desktop { max-width: 1366px; min-height: 768px; display: flex; flex-direction: column; overflow: hidden; }

/* browser tabs */
.tabs { height: 34px; background: #dee1e6; display: flex; align-items: stretch; padding-left: 8px; }
.tab { flex: 0 1 218px; min-width: 0; display: flex; align-items: center; padding: 0 8px 0 12px; position: relative; }
.tab.active { background: #fff; border-radius: 8px 8px 0 0; }
.line-left::before, .line-right::after { content: ""; position: absolute; left: 0; top: 7px; width: 1px; height: 20px; background: #808388; }
.line-right::after { left: auto; right: 0; }
.fav { width: 16px; height: 16px; margin-right: 8px; }
.tab-name { flex: 1; font: 12px Roboto, sans-serif; white-space: nowrap; overflow: hidden; color: #45484c; -webkit-mask-image: linear-gradient(to right, #000 88%, transparent); mask-image: linear-gradient(to right, #000 88%, transparent); }
.tab-x { width: 14px; height: 14px; margin-left: 8px; }
.tab-x svg { width: 10px; height: 10px; stroke: #3c4043; stroke-width: 1.700; }
.new-tab { width: 44px; }
.win { margin-left: auto; display: flex; height: 28px; }
.win button { width: 46px; }
.win svg { width: 12px; height: 12px; fill: none; stroke: #111; }

/* address row */
.nav { height: 43px; background: #fff; border-bottom: 1px solid #d5d7da; display: flex; align-items: center; padding: 0 6px; }
.nav-b { width: 32px; height: 32px; }
.nav-b svg { width: 16px; height: 16px; fill: none; stroke-width: 2; }
.nav-b.thin svg { stroke-width: 1.200; }
.omni { flex: 1; min-width: 0; height: 34px; margin: 0 6px; border-radius: 17px; background: #f1f3f4; display: flex; align-items: center; padding: 0 2px 0 13px; }
.lock { width: 10px; height: 12px; margin-right: 11px; }
.url { flex: 1; min-width: 0; overflow: hidden; white-space: nowrap; font-size: 13px; color: #5f6368; text-decoration: none; }
.url b { font-weight: 400; color: #202124; }
.me { width: 22px; height: 22px; border-radius: 50%; background: #bf360c; color: #fff; font-size: 12px; line-height: 20px; }

/* mural canvas */
.canvas { flex: 1; min-height: 651px; position: relative; background: #fafafa; overflow: hidden; }
.teal-edge { position: absolute; left: 0; top: 28px; width: 19px; height: 32px; background: #87e7d9; }
.sheet { position: absolute; left: 396px; top: 60px; width: 622px; bottom: -400px; background: #fff; border: 2px solid #dfdfdf; font-family: Lato, sans-serif; }
.vline { position: absolute; left: 306px; top: 34px; bottom: 0; width: 2px; background: #d4d4d4; }
.hline { position: absolute; left: 28px; top: 322px; width: 558px; height: 2px; background: #d9d9d9; }
.head { position: absolute; top: 21px; display: flex; gap: 11px; }
.head h2 { font-size: 9px; line-height: 11px; font-weight: 900; color: #111; }
.head p { font-size: 7px; line-height: 9px; color: #777; white-space: nowrap; margin-top: 2px; }
.badge { width: 33px; height: 33px; display: flex; align-items: center; justify-content: center; flex: none; }
.badge svg { width: 18px; height: 18px; }
.says { left: 19px; }
.says .badge { background: #87e7d9; }
.thinks, .feels { right: 19px; flex-direction: row-reverse; text-align: right; }
.thinks .badge { background: #a0dcfa; }
.does { left: 63px; }
.does, .feels { top: 582px; }
.feels .badge { background: #fcb3d2; }
.scribble { position: absolute; left: 252px; top: 318px; width: 20px; height: 24px; }

.note { position: absolute; display: flex; align-items: center; padding: 0 0 2px 2px; border: 1px solid #444; white-space: nowrap; font-family: Lato, sans-serif; }
.teal { background: #87e7d9; border-color: #3f6b66; color: #10302c; }
.red { background: #c10c0d; border-color: #5a1a1a; color: #fff; }
.red.soft { border-color: #ea5a5a; }
.purple { background: #7135cb; border-color: #38215f; color: #fff; }
.brown { background: #b05c0e; border-color: #5c4630; color: #fff; }
.pink { background: #fcb3d2; border-color: #6e545f; color: #2d1f26; }
.t12 { font-size: 10px; line-height: 12px; }
.t13 { font-size: 11px; line-height: 13px; }
.t14 { font-size: 12px; line-height: 14px; }
.t14.sm { font-size: 11px; }
.t15 { font-size: 12px; line-height: 15px; }
.t16 { font-size: 13px; line-height: 16px; }
.t17 { font-size: 15px; line-height: 17px; }
.t17.sm { font-size: 14px; }

/* floating bars */
.bar { height: 48px; padding: 0 6px; background: #fff; border-radius: 14px; box-shadow: 0 1px 3px rgba(0,0,0,.16); display: flex; align-items: center; flex: none; }
.topbar { position: absolute; left: 16px; right: 16px; top: 8px; display: flex; gap: 8px; }
.push { margin-left: auto; }
.ic { width: 36px; height: 36px; }
.ic svg { width: 20px; height: 20px; fill: #1f1f1f; }
.sep { width: 2px; height: 20px; margin: 0 2px; background: #ececec; flex: none; }
.logo { width: 32px; height: 26px; margin: 0 16px 0 6px; }
.title { font: 700 13px Inter, sans-serif; white-space: nowrap; width: 109px; color: #222; }
.share, .plan { height: 32px; border-radius: 8px; color: #fff; font: 800 11px Inter, sans-serif; }
.share { width: 80px; margin: 0 2px; background: #e22a38; gap: 8px; }
.plan { width: 54px; margin: 0 4px 0 2px; background: #1f1f1f; gap: 5px; }
.mm { width: 32px; height: 32px; border-radius: 7px; background: #939393; color: #000; font-size: 15px; line-height: 32px; text-align: center; margin-right: 2px; position: relative; }
.tools { position: absolute; left: 16px; top: 135px; width: 52px; padding: 3px 0; background: #1f1f1f; border-radius: 12px; }
.tools button { width: 52px; height: 46px; }
.tools svg { width: 24px; height: 24px; fill: #fff; }
.people { position: absolute; left: 636px; bottom: 16px; }
.people .sep { margin: 0 8px 0 2px; }
.host svg { position: absolute; right: -4px; bottom: -4px; width: 16px; height: 16px; }
.corner { position: absolute; right: 16px; bottom: 16px; display: flex; flex-direction: column; align-items: flex-end; gap: 9px; }
.map { width: 284px; height: 148px; border: 1px solid #dcdcdc; border-radius: 14px; overflow: hidden; background: #fff; }
.dark { width: 32px; height: 32px; background: #1f1f1f; border-radius: 8px; margin: 0 2px; }
.pct { width: 48px; text-align: center; font: 500 12px Inter, sans-serif; }
.vscroll, .hscroll { position: absolute; background: rgba(130,130,130,.68); border-radius: 3px; }
.vscroll { right: 5px; top: 21px; width: 6px; bottom: 68px; }
.hscroll { left: 452px; right: 21px; bottom: 5px; height: 6px; }
.status { position: absolute; left: 0; bottom: 0; width: 453px; height: 22px; padding-left: 5px; font: 12px/24px Roboto, sans-serif; color: #50545a; background: #dee1e6; border-top-right-radius: 4px; }

/* taskbar */
.task { height: 40px; background: #03192b; display: flex; align-items: stretch; color: #fff; }
.start { width: 48px; }
.search { width: 344px; background: #f1f1f1; border-top: 1px solid #c9c9c9; display: flex; align-items: center; padding: 0 15px 0 9px; gap: 9px; }
.search input { flex: 1; min-width: 0; border: 0; padding: 0 0 2px; background: none; outline: 0; font: 15px "Open Sans", sans-serif; }
.search input::placeholder { color: #333; opacity: 1; }
.app { width: 48px; margin-right: 1px; border-bottom: 2px solid transparent; padding-top: 2px; }
.app svg { width: 24px; height: 24px; }
.view { margin-right: 3px; }
.open { background: linear-gradient(#76b9ed, #76b9ed) bottom / 40px 2px no-repeat border-box; }
.current { background: #394b5a; border-bottom-color: #76b9ed; }
.tray { margin-left: auto; display: flex; align-items: center; gap: 8px; font: 12px Roboto, sans-serif; }
.tray svg { fill: none; stroke: #fff; stroke-width: 1.200; }
.up { margin: 0 4px 0 14px; }
.clock { width: 84px; padding-top: 2px; font: 12px/18px Roboto, sans-serif; text-align: center; }
.note-c { width: 41px; position: relative; justify-content: flex-start; padding: 4px 0 0 4px; }
.note-c b { position: absolute; left: 13px; top: 16px; width: 16px; font-size: 11px; line-height: 16px; text-align: center; }
.peek { width: 5px; border-left: 1px solid #5c6974; }
```
